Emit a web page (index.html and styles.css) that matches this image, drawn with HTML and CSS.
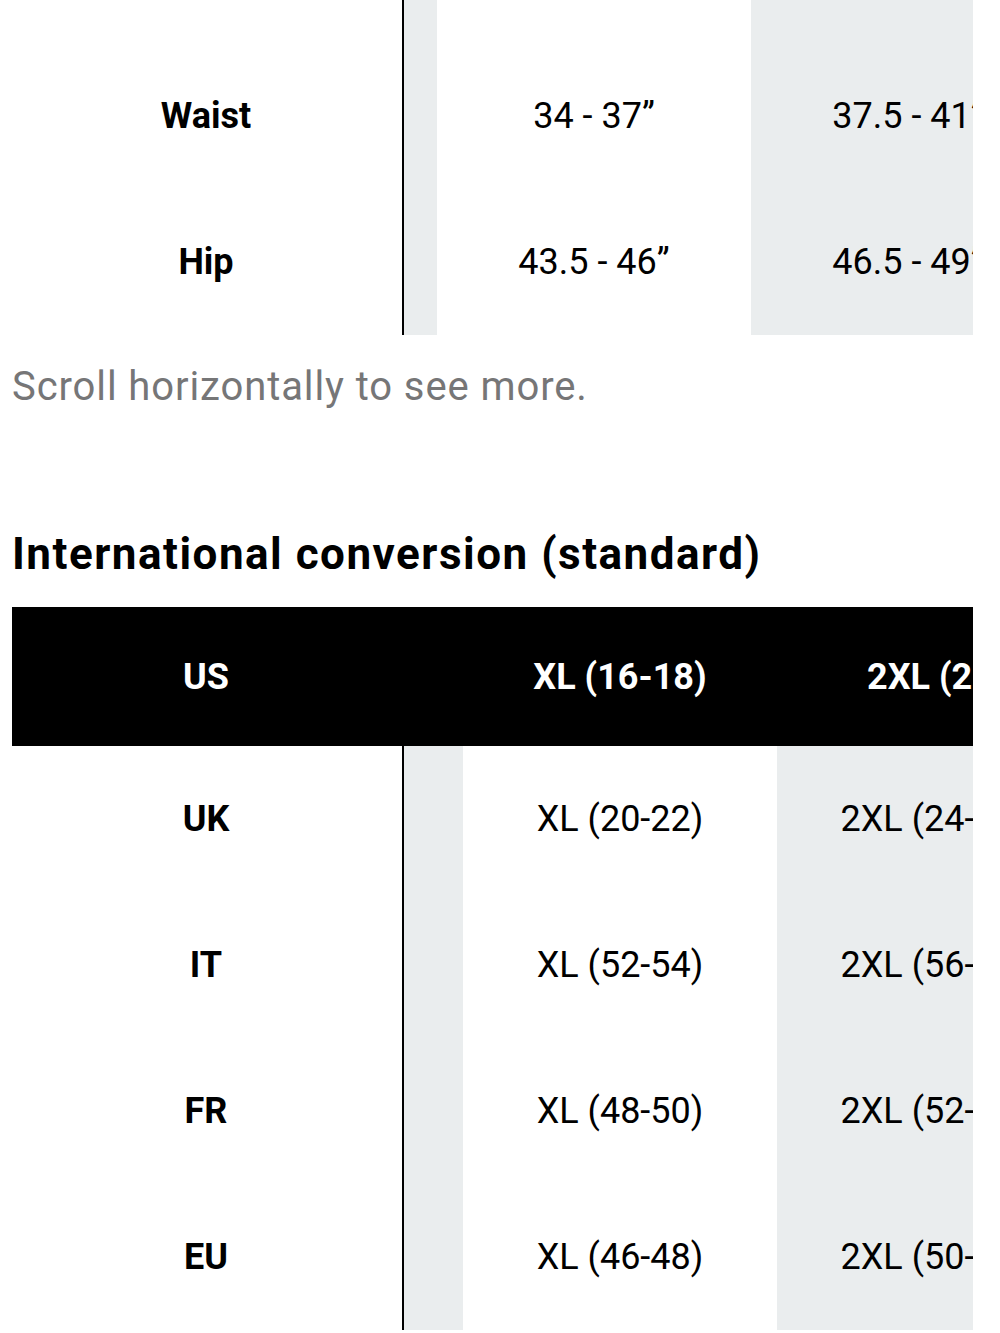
FILE: index.html
```html
<!DOCTYPE html>
<html lang="en">
<head>
<meta charset="utf-8">
<title>Size chart</title>
<link rel="stylesheet" href="styles.css">
</head>
<body>
<main class="page">
  <section class="chart chart-top">
    <div class="row row-spacer">
      <div class="label"></div>
      <div class="track"><div class="cols shift-a">
        <div class="cell gray"></div><div class="cell"></div><div class="cell gray"></div>
      </div></div>
    </div>
    <div class="row">
      <div class="label">Waist</div>
      <div class="track"><div class="cols shift-a">
        <div class="cell gray"></div><div class="cell">34 - 37”</div><div class="cell gray">37.5 - 41”</div>
      </div></div>
    </div>
    <div class="row">
      <div class="label">Hip</div>
      <div class="track"><div class="cols shift-a">
        <div class="cell gray"></div><div class="cell">43.5 - 46”</div><div class="cell gray">46.5 - 49”</div>
      </div></div>
    </div>
  </section>

  <p class="hint">Scroll horizontally to see more.</p>

  <h2 class="title">International conversion (standard)</h2>

  <section class="chart chart-bottom">
    <div class="row head">
      <div class="label">US</div>
      <div class="track"><div class="cols shift-b">
        <div class="cell"></div><div class="cell">XL (16-18)</div><div class="cell cell-wide">2XL (20-22)</div>
      </div></div>
    </div>
    <div class="row">
      <div class="label">UK</div>
      <div class="track"><div class="cols shift-b">
        <div class="cell gray"></div><div class="cell">XL (20-22)</div><div class="cell gray">2XL (24-26)</div>
      </div></div>
    </div>
    <div class="row">
      <div class="label">IT</div>
      <div class="track"><div class="cols shift-b">
        <div class="cell gray"></div><div class="cell">XL (52-54)</div><div class="cell gray">2XL (56-58)</div>
      </div></div>
    </div>
    <div class="row">
      <div class="label">FR</div>
      <div class="track"><div class="cols shift-b">
        <div class="cell gray"></div><div class="cell">XL (48-50)</div><div class="cell gray">2XL (52-54)</div>
      </div></div>
    </div>
    <div class="row">
      <div class="label">EU</div>
      <div class="track"><div class="cols shift-b">
        <div class="cell gray"></div><div class="cell">XL (46-48)</div><div class="cell gray">2XL (50-52)</div>
      </div></div>
    </div>
  </section>
</main>
</body>
</html>
```

FILE: styles.css
```css
* { box-sizing: border-box; }

html, body {
  margin: 0;
  padding: 0;
  background: #fff;
}

body {
  font-family: Roboto, "Liberation Sans", sans-serif;
  color: #000;
  overflow: hidden;
}

.page {
  width: 973px;
  padding-left: 12px;
}

.chart {
  display: flex;
  flex-direction: column;
}

.row {
  display: flex;
  height: 146px;
}

.row-spacer {
  height: 43px;
}

.label {
  flex: 0 0 392px;
  display: flex;
  align-items: center;
  justify-content: center;
  font-weight: 700;
  font-size: 36px;
  border-right: 2px solid #000;
  padding-right: 2px;
}

.track {
  flex: 1 1 auto;
  overflow: hidden;
}

.cols {
  display: flex;
  height: 100%;
}

.shift-a { margin-left: -281px; }
.shift-b { margin-left: -255px; }

.cell {
  flex: 0 0 314px;
  display: flex;
  align-items: center;
  justify-content: center;
  font-size: 36px;
  font-weight: 400;
  white-space: nowrap;
  background: #fff;
}

.cell.gray {
  background: #eaedee;
}

.head {
  height: 139px;
  background: #000;
  color: #fff;
}

.head .label {
  border-right-color: #000;
}

.head .cell {
  background: #000;
  font-weight: 700;
}

.head .cell-wide {
  justify-content: flex-start;
  padding-left: 90px;
}

.hint {
  margin: 0;
  height: 110px;
  padding-top: 30px;
  font-size: 40px;
  line-height: 44px;
  letter-spacing: 0.9px;
  color: #767677;
}

.title {
  margin: 0;
  padding-top: 84px;
  height: 162px;
  font-size: 44px;
  line-height: 50px;
  letter-spacing: 1.5px;
  font-weight: 700;
}
```
